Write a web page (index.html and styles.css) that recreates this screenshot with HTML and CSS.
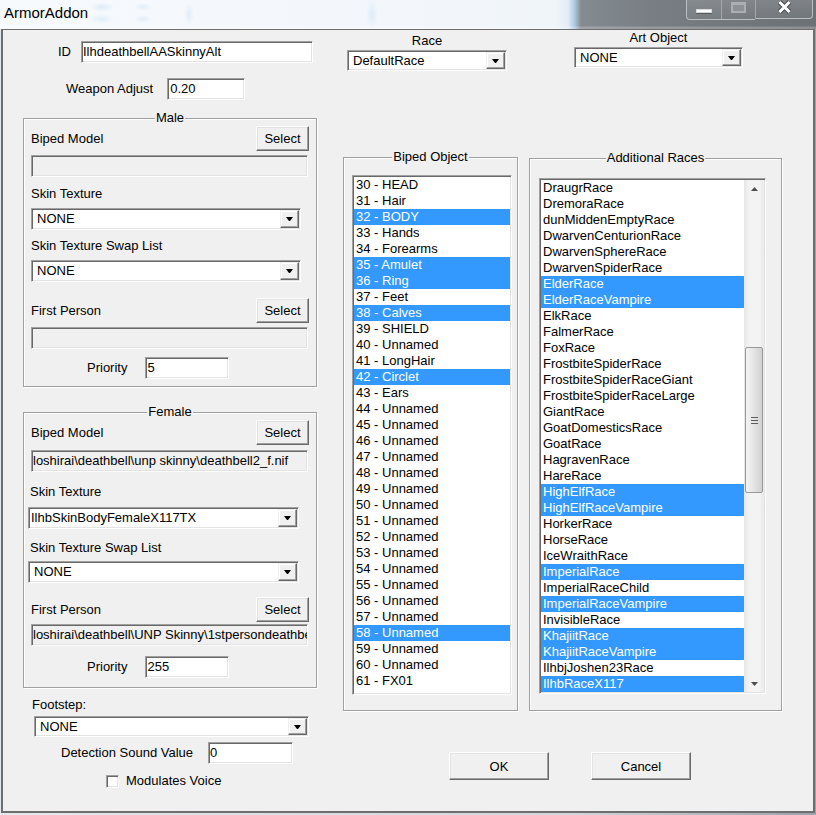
FILE: index.html
```html
<!DOCTYPE html>
<html lang="en">
<head>
  <meta charset="UTF-8" />
  <meta name="viewport" content="width=device-width, initial-scale=1.0" />
  <title>ArmorAddon</title>
  <link rel="stylesheet" href="styles.css">
</head>
<body>

  <div class="window">
    <div class="titlebar">
      <div class="title">ArmorAddon</div>
      <div class="caption">
        <div class="cap-pair">
          <div class="cap-btn cap-min"><span class="min-glyph"></span></div>
          <div class="cap-btn cap-max"><span class="max-glyph"></span></div>
        </div>
        <div class="cap-btn cap-close">
          <svg width="17" height="14" viewBox="0 0 17 14">
            <path d="M3.5 2 L13.5 12 M13.5 2 L3.5 12" stroke="#4a4f53" stroke-width="5" fill="none"/>
            <path d="M3.5 2 L13.5 12 M13.5 2 L3.5 12" stroke="#fff" stroke-width="3" fill="none"/>
          </svg>
        </div>
      </div>
    </div>

    <div class="client">

      <!-- left column: id, male / female models, sounds -->
      <div class="left-col">
        <div class="row id-row">
          <span class="lbl">ID</span>
          <div class="edit id-edit">IlhdeathbellAASkinnyAlt</div>
        </div>
        <div class="row weapon-row">
          <span class="lbl">Weapon Adjust</span>
          <div class="edit weapon-edit">0.20</div>
        </div>

        <div class="group male">
          <div class="group-title"><span>Male</span></div>
          <div class="pick-row biped">
            <span class="lbl">Biped Model</span>
            <div class="btn select-btn">Select</div>
          </div>
          <div class="edit readonly path biped-path"></div>
          <div class="lbl skin-lbl">Skin Texture</div>
          <div class="combo skin-combo"><span class="combo-text">NONE</span><span class="drop"></span></div>
          <div class="lbl swap-lbl">Skin Texture Swap List</div>
          <div class="combo swap-combo"><span class="combo-text">NONE</span><span class="drop"></span></div>
          <div class="pick-row fp">
            <span class="lbl">First Person</span>
            <div class="btn select-btn">Select</div>
          </div>
          <div class="edit readonly path fp-path"></div>
          <div class="row priority-row">
            <span class="lbl">Priority</span>
            <div class="edit">5</div>
          </div>
        </div>

        <div class="group female">
          <div class="group-title"><span>Female</span></div>
          <div class="pick-row biped">
            <span class="lbl">Biped Model</span>
            <div class="btn select-btn">Select</div>
          </div>
          <div class="edit readonly path biped-path">loshirai\deathbell\unp skinny\deathbell2_f.nif</div>
          <div class="lbl skin-lbl">Skin Texture</div>
          <div class="combo skin-combo"><span class="combo-text">IlhbSkinBodyFemaleX117TX</span><span class="drop"></span></div>
          <div class="lbl swap-lbl">Skin Texture Swap List</div>
          <div class="combo swap-combo"><span class="combo-text">NONE</span><span class="drop"></span></div>
          <div class="pick-row fp">
            <span class="lbl">First Person</span>
            <div class="btn select-btn">Select</div>
          </div>
          <div class="edit readonly path fp-path">loshirai\deathbell\UNP Skinny\1stpersondeathbell2_f.nif</div>
          <div class="row priority-row">
            <span class="lbl">Priority</span>
            <div class="edit">255</div>
          </div>
        </div>

        <div class="lbl footstep-lbl">Footstep:</div>
        <div class="combo footstep-combo"><span class="combo-text">NONE</span><span class="drop"></span></div>
        <div class="row detect-row">
          <span class="lbl">Detection Sound Value</span>
          <div class="edit">0</div>
        </div>
        <div class="row check-row">
          <span class="checkbox"></span>
          <span class="lbl">Modulates Voice</span>
        </div>
      </div>

      <!-- right column: race, art object, lists, buttons -->
      <div class="right-col">
        <div class="top-row">
          <div class="race-block">
            <div class="pick-lbl">Race</div>
            <div class="combo"><span class="combo-text">DefaultRace</span><span class="drop"></span></div>
          </div>
          <div class="art-block">
            <div class="pick-lbl">Art Object</div>
            <div class="combo"><span class="combo-text">NONE</span><span class="drop"></span></div>
          </div>
        </div>

        <div class="lists-row">
          <div class="group biped-group">
            <div class="group-title"><span>Biped Object</span></div>
            <div class="listbox biped-list">
              <div class="item">30 - HEAD</div>
              <div class="item">31 - Hair</div>
              <div class="item sel">32 - BODY</div>
              <div class="item">33 - Hands</div>
              <div class="item">34 - Forearms</div>
              <div class="item sel">35 - Amulet</div>
              <div class="item sel">36 - Ring</div>
              <div class="item">37 - Feet</div>
              <div class="item sel">38 - Calves</div>
              <div class="item">39 - SHIELD</div>
              <div class="item">40 - Unnamed</div>
              <div class="item">41 - LongHair</div>
              <div class="item sel">42 - Circlet</div>
              <div class="item">43 - Ears</div>
              <div class="item">44 - Unnamed</div>
              <div class="item">45 - Unnamed</div>
              <div class="item">46 - Unnamed</div>
              <div class="item">47 - Unnamed</div>
              <div class="item">48 - Unnamed</div>
              <div class="item">49 - Unnamed</div>
              <div class="item">50 - Unnamed</div>
              <div class="item">51 - Unnamed</div>
              <div class="item">52 - Unnamed</div>
              <div class="item">53 - Unnamed</div>
              <div class="item">54 - Unnamed</div>
              <div class="item">55 - Unnamed</div>
              <div class="item">56 - Unnamed</div>
              <div class="item">57 - Unnamed</div>
              <div class="item sel">58 - Unnamed</div>
              <div class="item">59 - Unnamed</div>
              <div class="item">60 - Unnamed</div>
              <div class="item">61 - FX01</div>
            </div>
          </div>

          <div class="group races-group">
            <div class="group-title"><span>Additional Races</span></div>
            <div class="listbox races-list">
              <div class="race-items">
                <div class="item">DraugrRace</div>
                <div class="item">DremoraRace</div>
                <div class="item">dunMiddenEmptyRace</div>
                <div class="item">DwarvenCenturionRace</div>
                <div class="item">DwarvenSphereRace</div>
                <div class="item">DwarvenSpiderRace</div>
                <div class="item sel">ElderRace</div>
                <div class="item sel">ElderRaceVampire</div>
                <div class="item">ElkRace</div>
                <div class="item">FalmerRace</div>
                <div class="item">FoxRace</div>
                <div class="item">FrostbiteSpiderRace</div>
                <div class="item">FrostbiteSpiderRaceGiant</div>
                <div class="item">FrostbiteSpiderRaceLarge</div>
                <div class="item">GiantRace</div>
                <div class="item">GoatDomesticsRace</div>
                <div class="item">GoatRace</div>
                <div class="item">HagravenRace</div>
                <div class="item">HareRace</div>
                <div class="item sel">HighElfRace</div>
                <div class="item sel">HighElfRaceVampire</div>
                <div class="item">HorkerRace</div>
                <div class="item">HorseRace</div>
                <div class="item">IceWraithRace</div>
                <div class="item sel">ImperialRace</div>
                <div class="item">ImperialRaceChild</div>
                <div class="item sel">ImperialRaceVampire</div>
                <div class="item">InvisibleRace</div>
                <div class="item sel">KhajiitRace</div>
                <div class="item sel">KhajiitRaceVampire</div>
                <div class="item">IlhbjJoshen23Race</div>
                <div class="item sel">IlhbRaceX117</div>
              </div>
              <div class="scrollbar">
                <div class="sb-arrow">
                  <svg width="7" height="4" viewBox="0 0 7 4"><path d="M0 4 L3.5 0 L7 4 Z" fill="#4d4d4d"/></svg>
                </div>
                <div class="sb-track">
                  <div class="sb-thumb">
                    <svg width="7" height="7" viewBox="0 0 7 7">
                      <path d="M0 0.5 H7 M0 3.5 H7 M0 6.5 H7" stroke="#5c5c5c" stroke-width="1"/>
                    </svg>
                  </div>
                </div>
                <div class="sb-arrow">
                  <svg width="7" height="4" viewBox="0 0 7 4"><path d="M0 0 L7 0 L3.5 4 Z" fill="#4d4d4d"/></svg>
                </div>
              </div>
            </div>
          </div>
        </div>

        <div class="buttons-row">
          <div class="btn dlg-btn">OK</div>
          <div class="btn dlg-btn">Cancel</div>
        </div>
      </div>

    </div>
  </div>

</body>
</html>
```

FILE: styles.css
```css
* {
  box-sizing: border-box;
}

body {
  margin: 0;
  font-family: "Liberation Sans", Arial, sans-serif;
  font-size: 13px;
  color: #000;
  background: #d9dfe6;
}

/* Window frame */
.window {
  width: 816px;
  height: 815px;
  display: flex;
  flex-direction: column;
  background: linear-gradient(to right, #e3e8ee, #cfd6de 70%, #9aa3ad);
}

.titlebar {
  height: 29px;
  flex-shrink: 0;
  display: flex;
  justify-content: space-between;
  align-items: flex-start;
  background:
    linear-gradient(to bottom, transparent 26px, rgba(255, 255, 255, 0.22) 27px),
    radial-gradient(ellipse 12px 5px at 102px 7px, rgba(175, 208, 236, 0.35), transparent),
    radial-gradient(ellipse 12px 5px at 102px 19px, rgba(175, 208, 236, 0.3), transparent),
    radial-gradient(ellipse 9px 4px at 143px 7px, rgba(175, 208, 236, 0.28), transparent),
    radial-gradient(ellipse 9px 4px at 143px 19px, rgba(175, 208, 236, 0.28), transparent),
    radial-gradient(ellipse 5px 11px at 189px 14px, rgba(175, 208, 236, 0.3), transparent),
    radial-gradient(ellipse 6px 14px at 372px 14px, rgba(175, 208, 236, 0.3), transparent),
    linear-gradient(to right, #f7fafd 0, #f0f5fa 555px, #e2edf7 568px, #a9c6de 575px, #848b91 581px, #787e83 650px, #6c7175 816px);
}

.title {
  padding: 4px 0 0 4px;
  font-size: 15px;
  line-height: 18px;
}

/* Caption buttons */
.caption {
  display: flex;
  margin-right: 3px;
}

.cap-pair {
  display: flex;
  border: 1px solid #b9bec2;
  border-top: none;
  border-right: none;
  border-bottom-left-radius: 4px;
  background: linear-gradient(rgba(255, 255, 255, 0.12), rgba(255, 255, 255, 0.03));
}

.cap-btn {
  height: 19px;
  display: flex;
  justify-content: center;
  align-items: flex-start;
}

.cap-min {
  width: 35px;
  border-right: 1px solid #a3a8ac;
}

.cap-max {
  width: 33px;
}

.min-glyph {
  width: 16px;
  height: 4px;
  margin-top: 9px;
  background: #fff;
  border: 1px solid #d6d8da;
  box-shadow: 0 1px 0 #555a5e;
}

.max-glyph {
  width: 15px;
  height: 11px;
  margin-top: 2px;
  background: #8c9195;
  border: 2px solid #abafb2;
  border-top-width: 3px;
}

.cap-close {
  width: 58px;
  padding-top: 0;
  border: 1px solid #b9bec2;
  border-top: none;
  border-left-color: #a3a8ac;
  border-bottom-right-radius: 4px;
  background: linear-gradient(rgba(255, 255, 255, 0.12), rgba(255, 255, 255, 0.03));
}

/* Dialog client area */
.client {
  flex: 1;
  display: flex;
  margin: 0 1px 2px 1px;
  padding-left: 20px;
  background: #f0f0f0;
  border: 2px solid #6e6e6e;
  border-top-width: 1px;
}

.left-col {
  width: 294px;
  display: flex;
  flex-direction: column;
  align-items: flex-start;
}

.right-col {
  width: 439px;
  margin-left: 26px;
  display: flex;
  flex-direction: column;
  align-items: flex-start;
}

.row {
  display: flex;
  align-items: center;
}

.lbl {
  line-height: 16px;
  white-space: nowrap;
}

/* Edit boxes */
.edit {
  height: 22px;
  padding: 0 1px;
  line-height: 20px;
  background: #fff;
  border: 1px solid;
  border-color: #a0a0a0 #fff #fff #a0a0a0;
  box-shadow: inset 1px 1px 0 #696969, inset -1px -1px 0 #e3e3e3;
  white-space: nowrap;
  overflow: hidden;
}

.edit.readonly {
  background: #f0f0f0;
}

.id-row {
  margin: 11px 0 0 35px;
}

.id-edit {
  width: 232px;
  margin-left: 10px;
}

.weapon-row {
  margin: 15px 0 0 43px;
}

.weapon-edit {
  width: 78px;
  margin-left: 14px;
  padding-left: 2px;
}

/* Buttons */
.btn {
  display: flex;
  align-items: center;
  justify-content: center;
  background: #f0f0f0;
  border: 1px solid;
  border-color: #fff #696969 #696969 #fff;
  box-shadow: inset -1px -1px 0 #a0a0a0, inset 1px 1px 0 #e3e3e3;
}

.select-btn {
  width: 53px;
  height: 25px;
}

.dlg-btn {
  width: 100px;
  height: 28px;
}

/* Combo boxes */
.combo {
  display: flex;
  height: 22px;
  padding: 1px;
  background: #fff;
  border: 1px solid;
  border-color: #a0a0a0 #fff #fff #a0a0a0;
  box-shadow: inset 1px 1px 0 #696969, inset -1px -1px 0 #e3e3e3;
}

.combo-text {
  flex: 1;
  padding-left: 4px;
  line-height: 18px;
  white-space: nowrap;
  overflow: hidden;
}

.drop {
  width: 19px;
  display: flex;
  align-items: center;
  justify-content: center;
  background: #f0f0f0;
  border: 1px solid;
  border-color: #f0f0f0 #696969 #696969 #f0f0f0;
  box-shadow: inset -1px -1px 0 #a0a0a0, inset 1px 1px 0 #fff;
}

.drop::after {
  content: "";
  width: 1px;
  height: 0;
  border-top: 4px solid #000;
  border-left: 3px solid transparent;
  border-right: 3px solid transparent;
}

/* Group boxes */
.group {
  border: 1px solid #a0a0a0;
  box-shadow: inset 1px 1px 0 #fff, 1px 1px 0 #fff;
}

.group-title {
  margin-top: -8px;
  height: 14px;
  line-height: 14px;
  text-align: center;
  align-self: stretch;
}

.group-title span {
  background: #f0f0f0;
  padding: 0 1px;
}

.male,
.female {
  width: 294px;
  display: flex;
  flex-direction: column;
  align-items: flex-start;
  padding: 0 7px 7px;
}

.male {
  margin-top: 18px;
}

.female {
  margin-top: 25px;
  padding-bottom: 9px;
}

.pick-row {
  width: 100%;
  height: 25px;
  display: flex;
  justify-content: space-between;
  align-items: center;
}

.path {
  width: 277px;
}

.group .combo {
  width: 270px;
}

.priority-row {
  padding-left: 56px;
}

.priority-row .edit {
  width: 84px;
  margin-left: 18px;
}

/* male spacing */
.male .biped { margin-top: 1px; }
.male .biped-path { margin-top: 4px; }
.male .skin-lbl { margin-top: 9px; }
.male .skin-combo { margin-top: 6px; }
.male .swap-lbl { margin-top: 8px; }
.male .swap-combo { margin-top: 6px; }
.male .fp { margin-top: 16px; }
.male .fp-path { margin-top: 4px; }
.male .priority-row { margin-top: 8px; }

/* female spacing */
.female .biped { margin-top: 1px; }
.female .biped-path { margin-top: 5px; }
.female .skin-lbl { margin: 12px 0 0 -1px; }
.female .skin-combo { margin: 7px 0 0 -3px; width: 271px; }
.female .swap-lbl { margin: 11px 0 0 -1px; }
.female .swap-combo { margin: 5px 0 0 -3px; width: 271px; }
.female .fp { margin-top: 14px; }
.female .fp-path { margin-top: 2px; }
.female .priority-row { margin-top: 10px; }

.female .skin-combo .combo-text {
  padding-left: 1px;
}

/* Footstep / sound */
.footstep-lbl {
  margin: 9px 0 0 9px;
}

.footstep-combo {
  width: 275px;
  height: 21px;
  margin: 3px 0 0 11px;
}

.detect-row {
  margin: 5px 0 0 38px;
}

.detect-row .edit {
  width: 85px;
  margin-left: 15px;
}

.check-row {
  margin: 9px 0 0 83px;
}

.checkbox {
  width: 13px;
  height: 13px;
  background: #fff;
  border: 1px solid;
  border-color: #a0a0a0 #fff #fff #a0a0a0;
  box-shadow: inset 1px 1px 0 #696969, inset -1px -1px 0 #e3e3e3;
}

.check-row .lbl {
  margin-left: 7px;
}

/* Race / Art object */
.top-row {
  display: flex;
  align-items: flex-start;
}

.race-block {
  width: 160px;
  margin: 3px 0 0 4px;
}

.art-block {
  width: 169px;
  margin-left: 67px;
}

.pick-lbl {
  line-height: 16px;
  text-align: center;
}

.top-row .combo {
  height: 21px;
  margin-top: 1px;
}

/* Lists */
.lists-row {
  display: flex;
  align-items: flex-start;
  margin-top: 86px;
}

.biped-group {
  width: 175px;
  padding: 0 5px 15px;
}

.races-group {
  width: 253px;
  margin: 1px 0 0 11px;
  padding: 0 9px 16px;
}

.listbox {
  padding: 1px;
  background: #fff;
  border: 1px solid;
  border-color: #a0a0a0 #fff #fff #a0a0a0;
  box-shadow: inset 1px 1px 0 #696969, inset -1px -1px 0 #e3e3e3;
  overflow: hidden;
}

.biped-list {
  width: 160px;
  height: 520px;
  margin: 11px 0 0 3px;
}

.races-list {
  width: 227px;
  height: 516px;
  margin-top: 13px;
  display: flex;
}

.race-items {
  flex: 1;
  overflow: hidden;
}

.item {
  height: 16px;
  line-height: 16px;
  padding-left: 2px;
  white-space: nowrap;
}

.item.sel {
  background: #3399ff;
  color: #fff;
}

/* Scrollbar */
.scrollbar {
  width: 20px;
  display: flex;
  flex-direction: column;
  background: linear-gradient(to right, #e6e6e6, #f3f3f3 25%, #f3f3f3 75%, #ebebeb);
}

.sb-arrow {
  height: 17px;
  display: flex;
  align-items: center;
  justify-content: center;
}

.sb-track {
  flex: 1;
}

.sb-thumb {
  height: 146px;
  margin: 150px 1px 0;
  display: flex;
  align-items: center;
  justify-content: center;
  border: 1px solid #989898;
  border-radius: 2px;
  background: linear-gradient(to right, #f4f4f4, #e4e4e4 50%, #d0d0d0);
}

/* Dialog buttons */
.buttons-row {
  display: flex;
  gap: 42px;
  margin: 41px 0 0 106px;
}
```
